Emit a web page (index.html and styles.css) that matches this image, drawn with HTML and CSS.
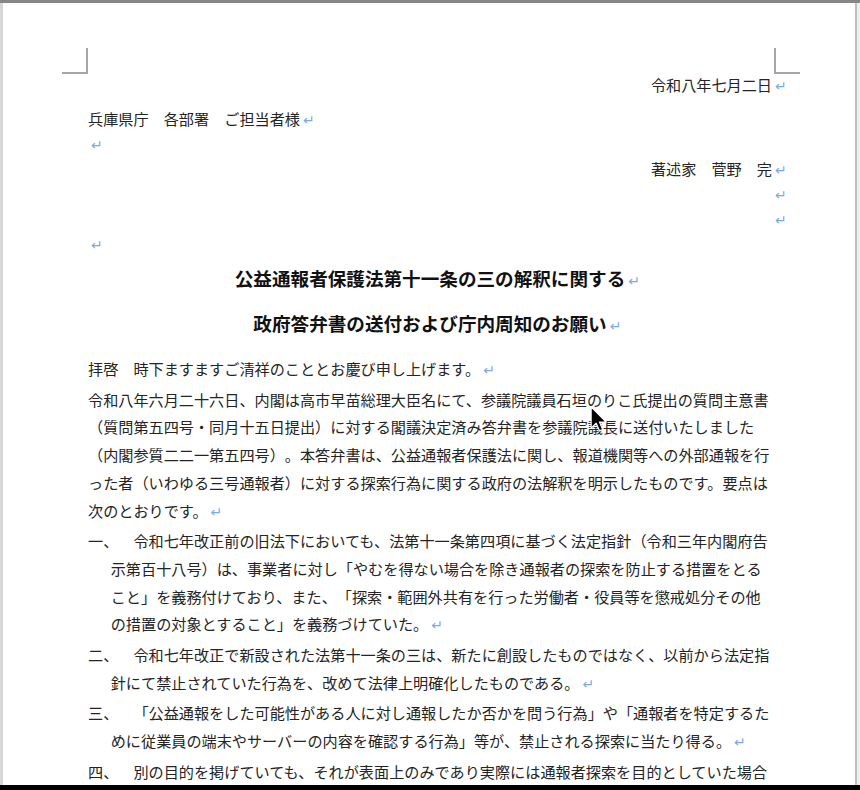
FILE: index.html
```html
<!DOCTYPE html>
<html lang="ja">
<head>
    <meta charset="UTF-8">
    <meta name="viewport" content="width=device-width, initial-scale=1.0">
    <title>政府答弁書の送付および庁内周知のお願い</title>
    <link rel="stylesheet" href="styles.css">
</head>
<body>
    <div class="screen">
        <div class="top-edge"></div>
        <div class="viewport">
            <div class="left-edge"></div>
            <div class="page">
                <span class="crop crop-left"></span>
                <span class="crop crop-right"></span>
                <div class="doc">
                    <p class="right date">令和八年七月二日<span class="pm">↵</span></p>
                    <p class="addressee">兵庫県庁　各部署　ご担当者様<span class="pm">↵</span></p>
                    <p class="short"><span class="pm">↵</span></p>
                    <p class="short right">著述家　菅野　完<span class="pm">↵</span></p>
                    <p class="short right"><span class="pm">↵</span></p>
                    <p class="short right"><span class="pm">↵</span></p>
                    <p class="short"><span class="pm">↵</span></p>

                    <h1 class="title">公益通報者保護法第十一条の三の解釈に関する<span class="pm">↵</span></h1>
                    <h1 class="title title-second">政府答弁書の送付および庁内周知のお願い<span class="pm">↵</span></h1>

                    <p class="greeting">拝啓　時下ますますご清祥のこととお慶び申し上げます。<span class="pm">↵</span></p>
                    <p class="body">令和八年六月二十六日、内閣は高市早苗総理大臣名にて、参議院議員石垣のりこ氏提出の質問主意書（質問第五四号・同月十五日提出）に対する閣議決定済み答弁書を参議院議長に送付いたしました（内閣参質二二一第五四号）。本答弁書は、公益通報者保護法に関し、報道機関等への外部通報を行った者（いわゆる三号通報者）に対する探索行為に関する政府の法解釈を明示したものです。要点は次のとおりです。<span class="pm">↵</span></p>

                    <div class="points">
                        <p class="point">一、　令和七年改正前の旧法下においても、法第十一条第四項に基づく法定指針（令和三年内閣府告示第百十八号）は、事業者に対し「やむを得ない場合を除き通報者の探索を防止する措置をとること」を義務付けており、また、「探索・範囲外共有を行った労働者・役員等を懲戒処分その他の措置の対象とすること」を義務づけていた。<span class="pm">↵</span></p>
                        <p class="point">二、　令和七年改正で新設された法第十一条の三は、新たに創設したものではなく、以前から法定指針にて禁止されていた行為を、改めて法律上明確化したものである。<span class="pm">↵</span></p>
                        <p class="point">三、　「公益通報をした可能性がある人に対し通報したか否かを問う行為」や「通報者を特定するために従業員の端末やサーバーの内容を確認する行為」等が、禁止される探索に当たり得る。<span class="pm">↵</span></p>
                        <p class="point">四、　別の目的を掲げていても、それが表面上のみであり実際には通報者探索を目的としていた場合</p>
                    </div>
                </div>
            </div>
            <div class="right-edge"></div>
        </div>
        <div class="bottom-edge"></div>

        <!-- mouse pointer -->
        <svg class="cursor" width="17" height="26" viewBox="0 0 12 19">
            <path d="M0.6 0.6 L0.6 16.2 L4.3 12.6 L6.8 18.2 L9.1 17.2 L6.7 11.7 L11.6 11.7 Z" fill="#000" stroke="#fff" stroke-width="0.9" stroke-linejoin="round"/>
        </svg>
    </div>
</body>
</html>
```

FILE: styles.css
```css
* {
    box-sizing: border-box;
}
body {
    margin: 0;
    background: #000;
    font-family: "Noto Sans CJK JP", "Noto Sans", sans-serif;
}
.screen {
    position: relative;
    width: 860px;
    height: 790px;
    display: flex;
    flex-direction: column;
    overflow: hidden;
}
.top-edge {
    flex: none;
    height: 3px;
    background: #868686;
}
.viewport {
    flex: 1;
    min-height: 0;
    display: flex;
    background: #fff;
}
.left-edge {
    width: 3px;
    background: #d6d6d6;
}
.right-edge {
    width: 5px;
    border-left: 2px solid #bfbfbf;
    background: #efefef;
}
.bottom-edge {
    flex: none;
    height: 5px;
    background: #000;
}
.page {
    position: relative;
    flex: 1;
    background: #fff;
    overflow: hidden;
}

/* margin corner marks */
.crop {
    position: absolute;
    top: 45px;
    width: 26px;
    height: 26px;
    border-bottom: 2px solid #a6a6a6;
}
.crop-left {
    left: 59px;
    border-right: 2px solid #a6a6a6;
}
.crop-right {
    left: 771px;
    border-left: 2px solid #a6a6a6;
}

.doc {
    width: 684px;
    margin-left: 85px;
    padding-top: 68px;
    font-size: 15.15px;
    line-height: 27.7px;
    color: #242424;
    line-break: normal;
    text-spacing-trim: space-all;
}
.doc p,
.doc h1 {
    margin: 0;
}
.right {
    text-align: right;
}
.date {
    line-height: 26px;
}
.addressee {
    margin-top: 8px !important;
    line-height: 26px;
}
.short {
    line-height: 25px;
}

/* paragraph mark, hangs past the text edge like in Word */
.pm {
    display: inline-block;
    width: 14px;
    margin-right: -14px;
    padding-left: 3px;
    font-family: "DejaVu Sans", sans-serif;
    font-size: 14px;
    line-height: 1;
    font-weight: normal;
    text-indent: 0;
    color: #7ea8e2;
    white-space: nowrap;
}

.title {
    margin-top: 7px !important;
    text-align: center;
    font-size: 18.6px;
    font-weight: 700;
    line-height: 30px;
    color: #111;
}
.title-second {
    margin-top: 15px !important;
}
.greeting {
    margin-top: 17px !important;
}
.body {
    margin-top: 3px !important;
}
.point {
    margin-top: 3px !important;
    padding-left: 1.5em;
    text-indent: -1.5em;
}

.cursor {
    position: absolute;
    left: 590px;
    top: 406px;
}
```
